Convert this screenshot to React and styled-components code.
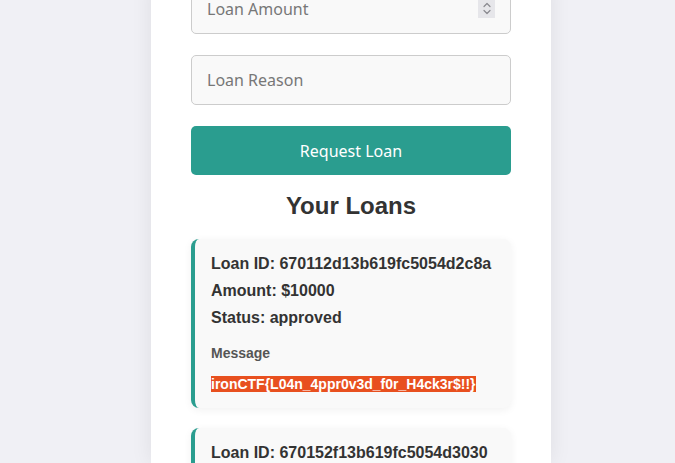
import React from "react";
import styled, { createGlobalStyle } from "styled-components";

const Global = createGlobalStyle`
  html, body { margin: 0; padding: 0; }
  body {
    background: #f0f0f5;
    font-family: "Liberation Sans", Arial, sans-serif;
    overflow: hidden;
  }
`;

const Page = styled.div`
  display: flex;
  justify-content: center;
  padding-left: 27px;
  height: 463px;
`;

const Container = styled.main`
  width: 400px;
  flex: none;
  box-sizing: border-box;
  background: #ffffff;
  padding: 0 40px;
  margin-top: -16px;
  box-shadow: 0 0 20px rgba(0, 0, 0, 0.08);
  display: flex;
  flex-direction: column;
`;

const Form = styled.form`
  display: flex;
  flex-direction: column;
  gap: 21px;
`;

const FieldWrap = styled.div`
  position: relative;
  width: 320px;
  height: 50px;
`;

const Field = styled.input`
  box-sizing: border-box;
  width: 320px;
  height: 50px;
  padding: 0 15px;
  border: 1px solid #cccccc;
  border-radius: 5px;
  background: #f9f9f9;
  font-family: "Noto Sans", "Open Sans", sans-serif;
  font-size: 16px;
  color: #333;
  outline: none;
  -moz-appearance: textfield;
  &::placeholder { color: #777777; }
  &::-webkit-inner-spin-button,
  &::-webkit-outer-spin-button { -webkit-appearance: none; margin: 0; }
`;

const Spinner = styled.span`
  position: absolute;
  right: 16px;
  top: 15px;
  width: 17px;
  height: 19px;
  background: #e6e6ea;
  display: flex;
  align-items: center;
  justify-content: center;
  pointer-events: none;
`;

const Button = styled.button`
  height: 49px;
  border: none;
  border-radius: 5px;
  background: #2a9d8f;
  color: #ffffff;
  font-family: "Noto Sans", "Open Sans", sans-serif;
  font-size: 16px;
  cursor: pointer;
`;

const Heading = styled.h2`
  margin: 17px 0 19px;
  text-align: center;
  font-size: 24px;
  line-height: 28px;
  font-weight: bold;
  color: #333333;
`;

const LoanList = styled.div`
  display: flex;
  flex-direction: column;
  gap: 20px;
`;

const LoanCard = styled.div`
  background: #f9f9f9;
  border-left: 4px solid #2a9d8f;
  border-radius: 8px;
  padding: 16px 16px 16px;
  box-shadow: 0 2px 8px rgba(0, 0, 0, 0.06);
`;

const Line = styled.p`
  margin: 0 0 9px;
  font-size: 16px;
  line-height: 18px;
  font-weight: bold;
  color: #333333;
`;

const MsgLabel = styled.div`
  margin-top: 17px;
  font-size: 14px;
  line-height: 18px;
  font-weight: bold;
  color: #555555;
`;

const MsgBody = styled.div`
  margin-top: 14px;
  font-size: 14px;
  line-height: 16px;
`;

const Flag = styled.span`
  background: #e8501f;
  color: #ffffff;
  font-weight: bold;
`;

const loans = [
  { id: "670112d13b619fc5054d2c8a", amount: 10000, status: "approved", message: "ironCTF{L04n_4ppr0v3d_f0r_H4ck3r$!!}" },
  { id: "670152f13b619fc5054d3030", amount: 10000, status: "approved", message: "" },
];

export default function App() {
  return (
    <>
      <Global />
      <Page>
        <Container>
          <Form onSubmit={(e) => e.preventDefault()}>
            <FieldWrap>
              <Field type="number" placeholder="Loan Amount" />
              <Spinner>
                <svg width="10" height="15" viewBox="0 0 10 15" fill="none" stroke="#8a8a8f" strokeWidth="1.2" strokeLinecap="round" strokeLinejoin="round">
                  <path d="M2 5.5 L5 2.5 L8 5.5" />
                  <path d="M2 9.5 L5 12.5 L8 9.5" />
                </svg>
              </Spinner>
            </FieldWrap>
            <Field type="text" placeholder="Loan Reason" />
            <Button type="submit">Request Loan</Button>
          </Form>
          <Heading>Your Loans</Heading>
          <LoanList>
            {loans.map((l) => (
              <LoanCard key={l.id}>
                <Line>Loan ID: {l.id}</Line>
                <Line>Amount: ${l.amount}</Line>
                <Line>Status: {l.status}</Line>
                <MsgLabel>Message</MsgLabel>
                <MsgBody>{l.message && <Flag>{l.message}</Flag>}</MsgBody>
              </LoanCard>
            ))}
          </LoanList>
        </Container>
      </Page>
    </>
  );
}
